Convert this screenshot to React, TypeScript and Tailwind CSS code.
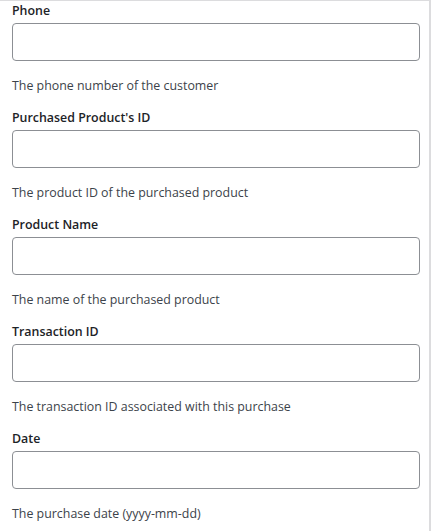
const fields = [
  { label: 'Phone', help: 'The phone number of the customer' },
  { label: "Purchased Product's ID", help: 'The product ID of the purchased product' },
  { label: 'Product Name', help: 'The name of the purchased product' },
  { label: 'Transaction ID', help: 'The transaction ID associated with this purchase' },
  { label: 'Date', help: 'The purchase date (yyyy-mm-dd)' },
];

export default function App() {
  return (
    <div className="w-[435px] min-h-[531px] bg-white" style={{ fontFamily: '"Open Sans", "Noto Sans", sans-serif' }}>
      <div className="w-[431px] min-h-[531px] border-t border-r-2 border-t-[#dcdcde] border-r-[#dcdcde] pt-[1px] pl-3 pr-[9px]">
        {fields.map((f) => (
          <div key={f.label} className="flex flex-col">
            <label className="text-[12.4px] leading-[18px] font-semibold text-[#1d2327]">{f.label}</label>
            <input
              type="text"
              className="mt-[3px] h-[38px] w-full rounded-[4px] border border-[#8c8f94] bg-white px-2 text-[14px] outline-none"
            />
            <p className="mt-4 mb-[14px] text-[12.4px] leading-[18px] text-[#3c434a]">{f.help}</p>
          </div>
        ))}
      </div>
    </div>
  );
}
